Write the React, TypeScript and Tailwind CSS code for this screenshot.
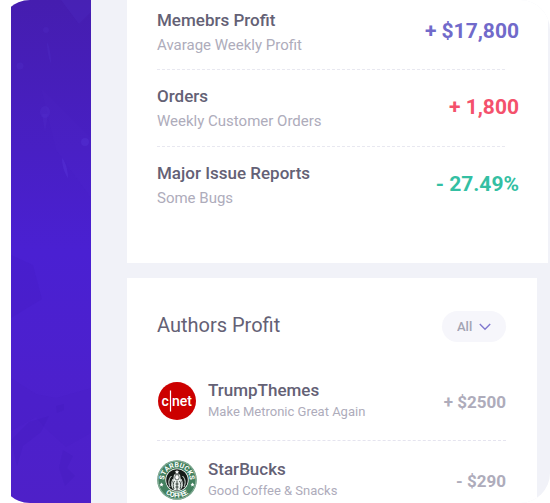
import React from "react";

type Stat = { title: string; note: string; value: string; color: string };
type Author = { name: string; note: string; value: string; logo: React.ReactNode };

const stats: Stat[] = [
  { title: "Memebrs Profit", note: "Avarage Weekly Profit", value: "+ $17,800", color: "text-[#716aca]" },
  { title: "Orders", note: "Weekly Customer Orders", value: "+ 1,800", color: "text-[#f4516c]" },
  { title: "Major Issue Reports", note: "Some Bugs", value: "- 27.49%", color: "text-[#34bfa3]" },
];

function CnetLogo() {
  return (
    <svg viewBox="0 0 40 40" className="size-10 shrink-0" role="img" aria-label="c|net">
      <circle cx="20" cy="20" r="19" fill="#cc0000" />
      <g fill="#fff" fontFamily="Roboto, sans-serif" fontSize="14" fontWeight="500">
        <text x="4.500" y="25">c</text>
        <text x="15" y="25">net</text>
      </g>
      <path d="M13.500 9.500v21" stroke="#fff" strokeWidth="1.200" />
    </svg>
  );
}

function StarbucksLogo() {
  return (
    <svg viewBox="0 0 40 40" className="size-10 shrink-0" role="img" aria-label="Starbucks Coffee">
      <defs>
        <path id="ring-top" d="M7.200 20a12.800 12.800 0 0 1 25.600 0" />
        <path id="ring-bottom" d="M2.400 20a17.600 17.600 0 0 0 35.200 0" />
      </defs>
      <circle cx="20" cy="20" r="19.800" fill="#43805f" />
      <circle cx="20" cy="20" r="19" fill="none" stroke="#c9dcd2" strokeWidth=".6" />
      <circle cx="20" cy="20" r="11.600" fill="#fff" />
      <circle cx="20" cy="20" r="10.800" fill="#161c19" />
      <g fill="#fff" fontFamily="Roboto, sans-serif" fontSize="7" fontWeight="700" textAnchor="middle">
        <text><textPath href="#ring-top" startOffset="50%">STARBUCKS</textPath></text>
        <text><textPath href="#ring-bottom" startOffset="50%">COFFEE</textPath></text>
      </g>
      <path d="m4.500 22.500.6 1.300 1.400.2-1 1 .2 1.400-1.200-.7-1.300.7.3-1.400-1-1 1.400-.2zM35.500 22.500l.6 1.300 1.400.2-1 1 .2 1.400-1.200-.7-1.300.7.3-1.400-1-1 1.400-.2z" fill="#fff" />
      <path d="m20 9.800.7 1.500 1.600.2-1.200 1 .3 1.600-1.400-.8-1.400.8.3-1.600-1.200-1 1.600-.2z" fill="#fff" />
      <path d="M17 14.500h6l.8 5.500 1.700 5.500-2.500 4.700h-6l-2.500-4.700 1.700-5.500z" fill="#e9efec" />
      <ellipse cx="20" cy="17.300" rx="2.200" ry="2.700" fill="#fff" stroke="#26332d" strokeWidth=".7" />
      <path d="M17.500 21c-1.500 2-1.800 5-.5 8M22.500 21c1.500 2 1.800 5 .5 8M20 21v9M18.500 24h3M18.500 27h3" fill="none" stroke="#26332d" strokeWidth=".9" />
      <path d="M14.500 16c-3 3-3.400 7-1.500 11M16 19c-1.800 3-1.500 6-.4 9.500M25.500 16c3 3 3.400 7 1.500 11M24 19c1.800 3 1.500 6 .4 9.500" fill="none" stroke="#dfe7e3" strokeWidth="1" />
    </svg>
  );
}

const authors: Author[] = [
  { name: "TrumpThemes", note: "Make Metronic Great Again", value: "+ $2500", logo: <CnetLogo /> },
  { name: "StarBucks", note: "Good Coffee & Snacks", value: "- $290", logo: <StarbucksLogo /> },
];

function SidebarTexture() {
  return (
    <svg viewBox="0 0 80 503" preserveAspectRatio="none" className="h-full w-full" aria-hidden="true">
      <g fill="#6040e0">
        <path d="M50 0h30v12l-12 12z" opacity=".1" />
        <circle cx="35" cy="30" r="3" opacity=".12" />
        <circle cx="9" cy="66" r="3.500" opacity=".15" />
        <path d="M36 42c3 5 4 15 4 22-3-7-4-15-4-22z" opacity=".15" />
        <ellipse cx="34" cy="112" rx="5" ry="6" opacity=".15" />
        <path d="M31 114l3 18 3-18z" opacity=".12" />
        <circle cx="74" cy="142" r="4" opacity=".25" />
        <path d="M51 158c4 4 6 14 6 20-4-5-6-14-6-20z" opacity=".3" />
        <path d="M30 88l50 50v60L45 150z" opacity=".04" />
      </g>
      <g fill="#3f18b5">
        <path d="M0 255l22 10 9 34L0 318z" opacity=".1" />
        <path d="M0 378l25 16 20 4 35-10v45l-25 14-20-18-10-12-25 14z" opacity=".08" />
        <path d="M45 406l8-2v6l-7 3zM0 440l18-18 20-6-8 16-18 14-6 20zM52 450l10 6-6 12 8 8-10 10-6-18z" opacity=".18" />
      </g>
    </svg>
  );
}

function StatRow({ stat, last }: { stat: Stat; last: boolean }) {
  return (
    <li
      className={`flex justify-between pt-[14px] pb-3 first:pt-2 first:pb-[11px] ${
        last ? "" : "border-b border-dashed border-[#e8e8f0]"
      }`}
    >
      <div className="leading-[25px]">
        <h3 className="text-[17px] font-medium text-[#646175]">{stat.title}</h3>
        <p className="text-[15px] text-[#aeacbb]">{stat.note}</p>
      </div>
      <span className={`-mr-3.5 text-[21px] leading-[46px] font-bold ${stat.color}`}>{stat.value}</span>
    </li>
  );
}

export default function App() {
  return (
    <div className="h-screen overflow-hidden bg-white pl-[11px] font-['Roboto',sans-serif]">
      <div className="h-full overflow-hidden">
        <div className="-ml-[11px] flex h-full overflow-hidden rounded-[30px] bg-[#f1f2f8]">
          <aside className="w-[91px] shrink-0 bg-linear-to-b from-[#451daf] via-[#4a20d2] to-[#4e20c8] pl-[11px]">
            <SidebarTexture />
          </aside>
          <main className="min-w-0 flex-1 pl-9">
            <section className="mr-0.5 mb-[15px] bg-white pr-[43px] pb-10 pl-[30px]">
              <ul>
                {stats.map((stat, i) => (
                  <StatRow key={stat.title} stat={stat} last={i === stats.length - 1} />
                ))}
              </ul>
            </section>
            <section className="mr-[13px] bg-white pt-[33px] pr-[31px] pl-[30px]">
              <header className="flex items-start justify-between">
                <h2 className="text-xl text-[#646175]">Authors Profit</h2>
                <div className="relative">
                  <select
                    aria-label="Filter authors"
                    className="block h-[31px] w-16 appearance-none rounded-full bg-[#f6f6fb] pl-[15px] text-[13px] font-medium text-[#a3a4b3]"
                  >
                    <option>All</option>
                  </select>
                  <svg
                    viewBox="0 0 12 8"
                    className="pointer-events-none absolute top-3 right-[15px] h-2 w-3"
                    fill="none"
                    stroke="#8078cf"
                    strokeWidth="1.400"
                    aria-hidden="true"
                  >
                    <path d="M.8 1 6 6.300 11.200 1" />
                  </svg>
                </div>
              </header>
              <ul className="mt-5">
                {authors.map((author) => (
                  <li
                    key={author.name}
                    className="flex items-center border-b border-dashed border-[#e5e4ef] py-[17px] last:border-b-0"
                  >
                    {author.logo}
                    <div className="ml-[11px] flex-1 leading-[22px]">
                      <h3 className="text-[17px] font-medium text-[#646175]">{author.name}</h3>
                      <p className="text-[13px] text-[#aeacbb]">{author.note}</p>
                    </div>
                    <span className="pt-1 text-[17px] font-bold text-[#aeacbb]">{author.value}</span>
                  </li>
                ))}
              </ul>
            </section>
          </main>
        </div>
      </div>
    </div>
  );
}
